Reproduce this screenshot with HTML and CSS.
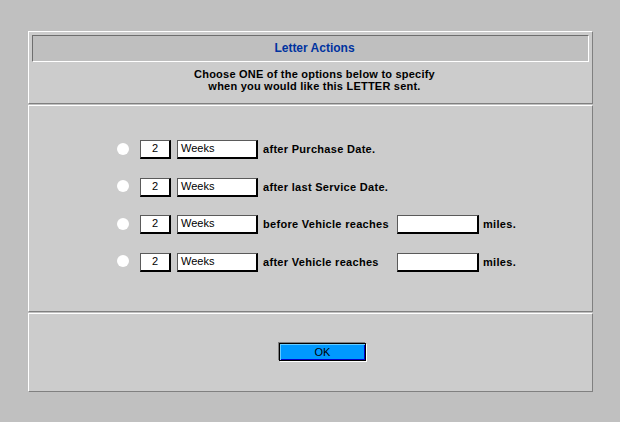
FILE: index.html
```html
<!DOCTYPE html>
<html>
<head>
<meta charset="utf-8">
<link rel="stylesheet" href="styles.css">
</head>
<body>
<div class="dialog">
  <div class="panel head">
    <div class="title">Letter Actions</div>
    <div class="intro">Choose ONE of the options below to specify<br>when you would like this LETTER sent.</div>
  </div>
  <div class="panel body">
    <div class="grid">
      <span class="radio"></span>
      <span class="field num">2</span>
      <span class="field unit">Weeks</span>
      <span class="label">after Purchase Date.</span>
      <span></span><span></span>

      <span class="radio"></span>
      <span class="field num">2</span>
      <span class="field unit">Weeks</span>
      <span class="label">after last Service Date.</span>
      <span></span><span></span>

      <span class="radio"></span>
      <span class="field num">2</span>
      <span class="field unit">Weeks</span>
      <span class="label">before Vehicle reaches</span>
      <span class="field miles"></span>
      <span class="label tail">miles.</span>

      <span class="radio"></span>
      <span class="field num">2</span>
      <span class="field unit">Weeks</span>
      <span class="label">after Vehicle reaches</span>
      <span class="field miles"></span>
      <span class="label tail">miles.</span>
    </div>
  </div>
  <div class="panel foot">
    <button class="ok">OK</button>
  </div>
</div>
</body>
</html>
```
FILE: styles.css
```css
html, body {
  margin: 0;
  padding: 0;
  background: #c0c0c0;
  font-family: "Liberation Sans", Arial, sans-serif;
  font-size: 11px;
  color: #000;
}
body {
  width: 620px;
  height: 422px;
  overflow: hidden;
}
.dialog {
  padding: 31px 0 0 28px;
  width: 565px;
  display: flex;
  flex-direction: column;
  gap: 1px;
}
.panel {
  background: #cccccc;
  border-top: 1px solid #ffffff;
  border-left: 1px solid #ffffff;
  border-right: 1px solid #808080;
  border-bottom: 1px solid #808080;
  box-sizing: border-box;
}
.head {
  height: 73px;
  padding: 3px 3px 0 3px;
}
.title {
  height: 27px;
  box-sizing: border-box;
  background: #bfbfbf;
  border-top: 1px solid #6e6e6e;
  border-left: 1px solid #6e6e6e;
  border-right: 1px solid #ffffff;
  border-bottom: 1px solid #ffffff;
  color: #0033a0;
  font-weight: bold;
  font-size: 12px;
  text-align: center;
  line-height: 24px;
  padding-left: 8px;
}
.intro {
  font-weight: bold;
  text-align: center;
  line-height: 12px;
  margin-top: 6px;
  padding-left: 8px;
  letter-spacing: 0.22px;
}
.body {
  height: 207px;
  padding: 34px 0 0 88px;
}
.grid {
  display: grid;
  grid-template-columns: 12px 42px 87px 139px 82px auto;
  row-gap: 18.67px;
  grid-auto-rows: 19px;
  align-items: center;
}
.radio {
  width: 12px;
  height: 12px;
  border-radius: 50%;
  background: #ffffff;
  margin-top: -2px;
}
.field {
  box-sizing: border-box;
  height: 19px;
  background: #ffffff;
  border-top: 1px solid #5a5a5a;
  border-left: 1px solid #5a5a5a;
  border-right: 2px solid #000;
  border-bottom: 2px solid #000;
  line-height: 14px;
  font-size: 11px;
}
.num {
  margin-left: 11px;
  width: 31px;
  text-align: center;
}
.unit {
  margin-left: 6px;
  width: 81px;
  padding-left: 3px;
}
.miles {
  width: 82px;
}
.label {
  font-weight: bold;
  padding-left: 5px;
  white-space: nowrap;
  letter-spacing: 0.3px;
  margin-top: -1px;
}
.label.tail {
  padding-left: 4px;
}
.foot {
  height: 79px;
  padding: 29px 0 0 250px;
}
.ok {
  display: block;
  width: 87px;
  height: 18px;
  box-sizing: border-box;
  margin: 0;
  padding: 0;
  background: #0099ff;
  border: 1px solid #000;
  box-shadow: -1px -1px 0 #808080, 1px 1px 0 #ffffff, inset 1px 1px 0 #66ccff, inset -1px -1px 0 #0000cc;
  font-family: "Liberation Sans", Arial, sans-serif;
  font-size: 11px;
  color: #000;
  line-height: 15px;
}
```
